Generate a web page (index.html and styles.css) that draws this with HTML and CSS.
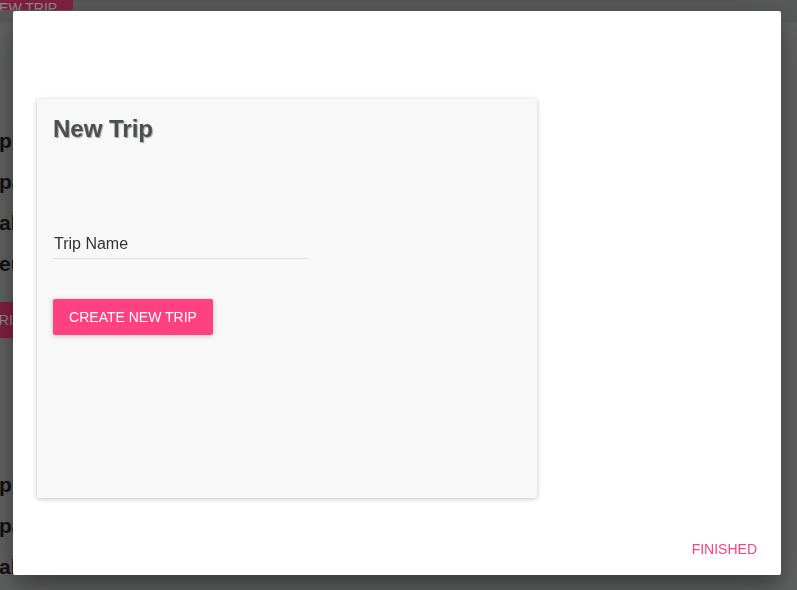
FILE: index.html
```html
<!DOCTYPE html>
<html>
<head>
<meta charset="utf-8">
<link rel="stylesheet" href="styles.css">
</head>
<body>
<div class="page">
  <div class="topbar">
    <button class="pagebtn top">NEW TRIP</button>
  </div>
  <div class="list">
    <div class="item">plan</div>
    <div class="item">pack</div>
    <div class="item">alaska</div>
    <div class="item">europe</div>
  </div>
  <button class="pagebtn mid">NEW TRIP</button>
  <div class="list lower">
    <div class="item">plan</div>
    <div class="item">pack</div>
    <div class="item">alaska</div>
  </div>
</div>
<div class="overlay"></div>
<div class="dialog">
  <div class="dialog-body">
    <div class="card">
      <h1 class="title">New Trip</h1>
      <div class="field">
        <input class="input" type="text" value="Trip Name">
      </div>
      <button class="create">CREATE NEW TRIP</button>
    </div>
  </div>
  <div class="actions">
    <button class="finished">FINISHED</button>
  </div>
</div>
</body>
</html>
```
FILE: styles.css
```css
html, body {
  margin: 0;
  padding: 0;
  height: 100%;
  overflow: hidden;
  font-family: "Liberation Sans", Arial, sans-serif;
}
.page {
  background: #b2b4b3;
  height: 590px;
  display: flow-root;
}
.topbar {
  height: 22px;
  background: #a3a5a4;
  display: flow-root;
}
.pagebtn {
  display: block;
  border: none;
  background: #f03c7a;
  color: #fff;
  font-family: "Liberation Sans", Arial, sans-serif;
  font-size: 14px;
  line-height: 16px;
  height: 36px;
  padding: 0 16px;
  border-radius: 2px;
  white-space: nowrap;
}
.pagebtn.top {
  margin-left: -27px;
  margin-top: -26px;
  width: 100px;
  padding-top: 26px;
  overflow: hidden;
}
.list {
  padding-top: 107px;
  display: flex;
  flex-direction: column;
  gap: 17px;
}
.item {
  font-weight: bold;
  font-size: 21px;
  line-height: 24px;
  color: #222;
  margin-left: -1px;
}
.pagebtn.mid {
  margin-top: 26px;
  margin-left: -62px;
  width: 100px;
}
.list.lower {
  padding-top: 135px;
}
.overlay {
  position: fixed;
  inset: 0;
  background: rgba(0, 0, 0, 0.46);
}
.dialog {
  position: fixed;
  left: 13px;
  top: 11px;
  width: 768px;
  height: 564px;
  background: #fff;
  box-shadow: 0 14px 45px rgba(0, 0, 0, 0.25), 0 10px 18px rgba(0, 0, 0, 0.22);
  border-radius: 2px;
  display: flex;
  flex-direction: column;
}
.dialog-body {
  flex: 1;
  padding: 88px 24px 0;
}
.card {
  width: 500px;
  height: 399px;
  box-sizing: border-box;
  background: #f7f8f7;
  box-shadow: 0 1px 6px rgba(0, 0, 0, 0.12), 0 1px 4px rgba(0, 0, 0, 0.12);
  border-radius: 2px;
  padding: 16px;
}
.title {
  margin: 0;
  font-size: 24px;
  line-height: 28px;
  font-weight: bold;
  color: #4b504e;
  text-shadow: 1px 1px 1px rgba(0, 0, 0, 0.35);
}
.field {
  margin-top: 86px;
  width: 256px;
  border-bottom: 1px solid #e0e0e0;
}
.input {
  display: block;
  width: 100%;
  height: 29px;
  border: none;
  background: transparent;
  padding: 0 0 0 1px;
  margin: 0;
  font-family: "Liberation Sans", Arial, sans-serif;
  font-size: 16px;
  color: #333;
  outline: none;
}
.create {
  margin-top: 40px;
  height: 36px;
  width: 160px;
  border: none;
  border-radius: 2px;
  background: #ff4081;
  color: #fff;
  font-family: "Liberation Sans", Arial, sans-serif;
  font-size: 14px;
  padding: 0 16px;
  box-shadow: 0 1px 6px rgba(0, 0, 0, 0.12), 0 1px 4px rgba(0, 0, 0, 0.12);
}
.actions {
  display: flex;
  justify-content: flex-end;
  padding: 8px;
}
.finished {
  height: 36px;
  border: none;
  background: transparent;
  color: #ff4081;
  font-family: "Liberation Sans", Arial, sans-serif;
  font-size: 14px;
  padding: 0 16px;
}
```
